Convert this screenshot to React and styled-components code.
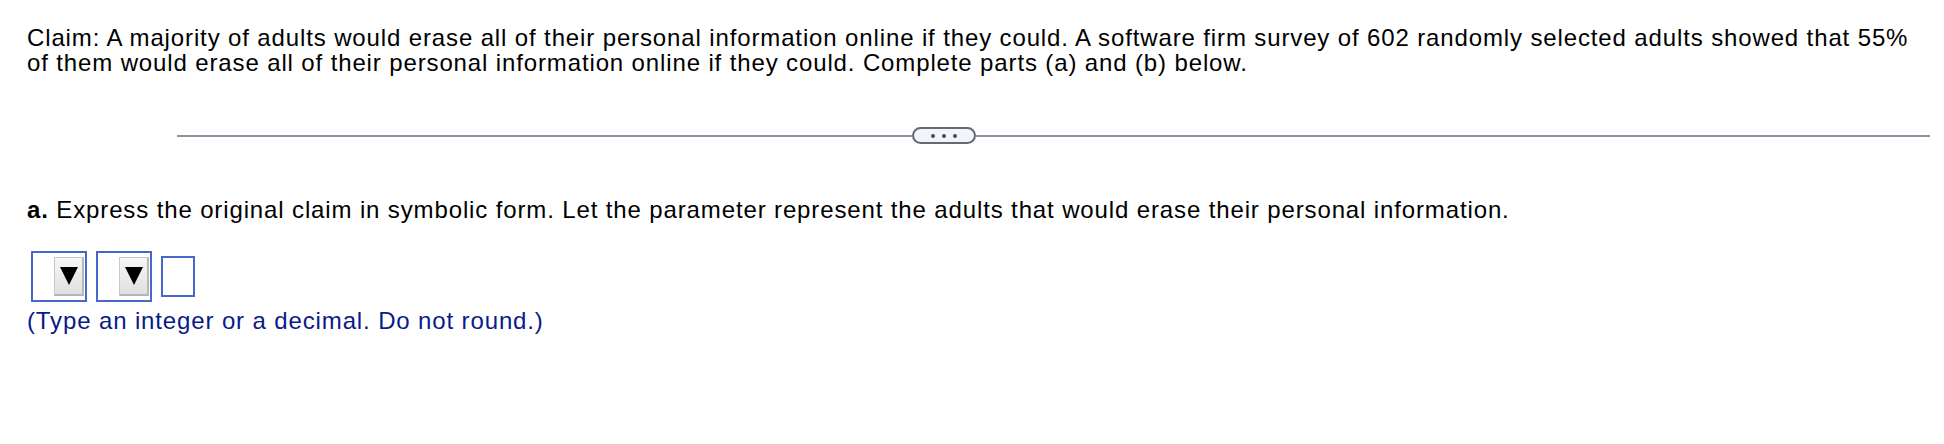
import React from 'react';
import styled, { createGlobalStyle } from 'styled-components';

const GlobalStyle = createGlobalStyle`
    body {
        margin: 0;
        background: #ffffff;
        font-family: "Liberation Sans", Arial, sans-serif;
    }
`

function App() {
    return (
        <Page>
            <GlobalStyle />
            <Claim>
                Claim: A majority of adults would erase all of their personal information online if they could. A software firm survey of 602 randomly selected adults showed that 55%
                of them would erase all of their personal information online if they could. Complete parts (a) and (b) below.
            </Claim>
            <Divider>
                <Line width="735px" />
                <Pill>
                    <Dot /><Dot /><Dot />
                </Pill>
                <Line />
            </Divider>
            <Question>
                <b>a.</b> Express the original claim in symbolic form. Let the parameter represent the adults that would erase their personal information.
            </Question>
            <AnswerRow>
                <Select><Arrow /></Select>
                <Select><Arrow /></Select>
                <TextBox />
            </AnswerRow>
            <Hint>(Type an integer or a decimal. Do not round.)</Hint>
        </Page>
    )
}

export default App

const Page = styled.div`
    width: 1944px;
    height: 444px;
    padding: 25px 0 0 27px;
    box-sizing: border-box;
    color: #000;
    font-size: 24px;
    line-height: 25px;
    letter-spacing: 0.87px;
`

const Claim = styled.div`
    width: 1900px;
`

const Divider = styled.div`
    display: flex;
    align-items: center;
    margin: 52px 14px 0 150px;
`

const Line = styled.div`
    flex: ${props => props.width ? '0 0 ' + props.width : '1'};
    height: 2px;
    background: #8a919c;
`

const Pill = styled.div`
    display: flex;
    align-items: center;
    justify-content: center;
    gap: 7px;
    width: 64px;
    height: 17px;
    box-sizing: border-box;
    border: 2px solid #5f6b77;
    border-radius: 9px;
    background: #f3f4f6;
`

const Dot = styled.span`
    width: 4px;
    height: 4px;
    border-radius: 50%;
    background: #444b55;
`

const Question = styled.div`
    margin-top: 53px;
    b {
        font-weight: bold;
    }
`

const AnswerRow = styled.div`
    display: flex;
    align-items: center;
    gap: 7px;
    margin: 29px 0 0 4px;
`

const Select = styled.div`
    display: flex;
    justify-content: flex-end;
    align-items: center;
    width: 56px;
    height: 51px;
    margin-right: 2px;
    box-sizing: border-box;
    border: 2px solid #4767c9;
    padding: 4px 1px 4px 0;
`

const Arrow = styled.div`
    width: 30px;
    height: 39px;
    box-sizing: border-box;
    display: flex;
    align-items: center;
    justify-content: center;
    background: linear-gradient(#f7f7f7, #e0e0e0);
    border: 1px solid #c8c8c8;
    border-right: 2px solid #b8b8b8;
    border-bottom: 2px solid #b4b4b4;
    &::after {
        content: '';
        width: 0;
        height: 0;
        border-left: 9px solid transparent;
        border-right: 9px solid transparent;
        border-top: 18px solid #000;
    }
`

const TextBox = styled.div`
    width: 34px;
    height: 41px;
    box-sizing: border-box;
    border: 2px solid #4767c9;
`

const Hint = styled.div`
    color: #0a1a86;
    margin-top: 6px;
`
